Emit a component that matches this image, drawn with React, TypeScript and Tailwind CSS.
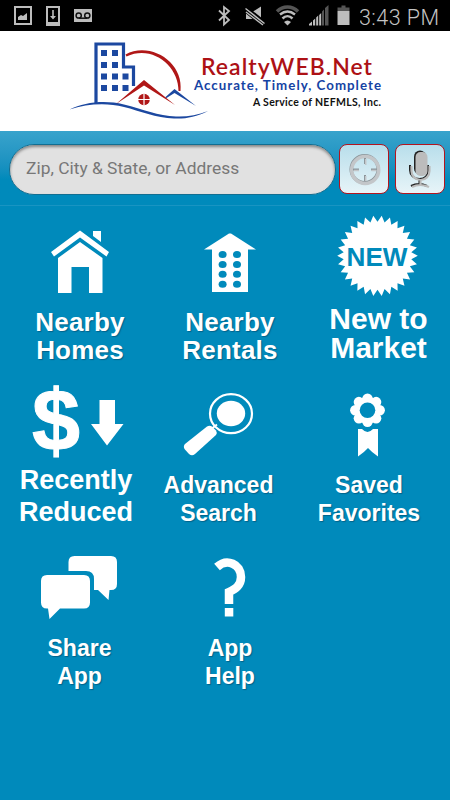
import type { ReactNode } from "react";

type TileProps = {
  viewBox: string;
  label: [string, string];
  labelClass: string;
  children: ReactNode;
};

const Tile = ({ viewBox, label, labelClass, children }: TileProps) => {
  return (
    <button type="button" className="flex flex-col items-start text-left">
      <svg viewBox={viewBox} className="w-[150px] h-[94px] shrink-0 overflow-visible" fill="white">
        {children}
      </svg>
      <span className={`block w-[150px] text-center font-bold whitespace-nowrap ${labelClass}`}>
        {label[0]}
        <br />
        {label[1]}
      </span>
    </button>
  );
};

const StatusBar = () => {
  return (
    <div className="h-[31px] bg-black flex items-center justify-between">
      <svg width="350" height="31" viewBox="0 0 350 31" fill="#bdbdbd">
        <path fillRule="evenodd" d="M14 6h18v19H14zM16 8v15h14V8z" />
        <path d="M18 20v-3l3-2 2 1 4-3v7z" />
        <path fillRule="evenodd" d="M46 6h14v20H46zM48 8v14h10V8z" />
        <path d="M52.2 10h1.6v6h2.2l-3 3.5-3-3.500h2.200z" />
        <path d="M74 9h18v13H74z" />
        <g fill="none" stroke="#111" strokeWidth="1.500">
          <circle cx="78.700" cy="15.500" r="2.600" />
          <circle cx="87.300" cy="15.500" r="2.600" />
          <path d="M78.700 18.200h8.600" />
        </g>
        <path d="M219 10.500l10 9.500-5 4.500V7l5 4-10 9.500" fill="none" stroke="#bdbdbd" strokeWidth="1.800" />
        <path d="M246 11.500h7l8-5v17l-8-4.500h-7z" />
        <path d="M246 9.500l18 14.500" stroke="#000" strokeWidth="6.500" />
        <path d="M245.500 8.500l19 15M246 12l17 13" stroke="#bdbdbd" strokeWidth="1.500" />
        <g fill="none">
          <path d="M277 11.500c6-6 15-6 21 0" stroke="#555" strokeWidth="3.500" />
          <path d="M280 14.500c5-4 10-4 15 0M282.500 18.500c3-3 7-3 10 0" stroke="#bdbdbd" strokeWidth="2.500" />
        </g>
        <path d="M284 22q3.500-3 7 0l-3.500 3.500z" />
        <path d="M309 25.500v-1.500l3-2.500v4zM313 25.500v-5l2.200-2v7zM316.200 25.500v-8l2-2v10zM319.200 25.500V15l2-2v12.500z" />
        <path d="M322 25.500V11.500l2-2v16zM325 25.500V8L328.500 5v20.500z" fill="#555" />
        <path d="M341.500 5.500h4v2h4V11h-12V7.500h4z" fill="#555" />
        <path d="M337.500 11h12v14h-12z" />
      </svg>
      <svg width="90" height="31" viewBox="360 0 90 31">
        <text x="359" y="24.500" fontFamily="Roboto, sans-serif" fontSize="21.500" fontWeight="300" fill="#c4c4c4" textLength="80">
          3:43 PM
        </text>
      </svg>
    </div>
  );
};

const Logo = () => {
  return (
    <header className="h-[100px] bg-white">
      <svg width="450" height="100" viewBox="0 31 450 100">
        <path d="M96 103V44h27.500v23h10v19" fill="none" stroke="#1c48a0" strokeWidth="3.200" />
        <g fill="#1c48a0">
          {[50, 62, 73.500, 85].map((y) => (
            <g key={y}>
              <rect x="101" y={y} width="6" height="6" />
              <rect x="112" y={y} width="6" height="6" />
              {y > 70 && <rect x="122.500" y={y} width="6" height="6" />}
            </g>
          ))}
          <path d="M69.500 109.500C85 102 105 100 124 104.500S158 116 176 116.500C187 117 197 115 208 111C196 117 186 119 174 118.500C156 118 140 111 124 107C106 102.500 87 104 69.500 109.500z" />
          <path d="M165 97.500l9.500-8.500L196 106l-21.500-13-8 5z" />
        </g>
        <path d="M125.500 54.500C150 41 184 62 180.500 91h-2C179 66 152 44 126.500 56.500z" fill="#b01717" />
        <path d="M116 104l28-24 31 25-31-19.500z" fill="#b01717" />
        <circle cx="144" cy="99.500" r="5.800" fill="#b01717" />
        <path d="M138 99.500h12M144 93.500v12" stroke="white" strokeWidth="1.200" />
        <text x="201" y="74.500" fontFamily="Lato, sans-serif" fontSize="23" fontWeight="600" fill="#ad1115" textLength="171">
          RealtyWEB.Net
        </text>
        <text x="194" y="90" fontFamily="Lato, sans-serif" fontSize="13.300" fontWeight="700" fill="#1543a4" textLength="187">
          Accurate, Timely, Complete
        </text>
        <text x="253" y="105.500" fontFamily="Lato, sans-serif" fontSize="10.500" fontWeight="700" fill="#111" textLength="128">
          A Service of NEFMLS, Inc.
        </text>
      </svg>
    </header>
  );
};

const SearchBar = () => {
  return (
    <div className="h-[75px] pt-[13px] pl-[9px] pr-[5px] flex items-start bg-linear-to-b from-[#38a3cc] to-[#008abb] to-65% border-b border-[#1994c2]">
      <div className="w-[327px] h-[51px] rounded-[25px] bg-[#e1e1e1] border border-[#126e91] shadow-[inset_0_2px_3px_rgba(0,0,0,0.400)] flex items-center pl-4">
        <input
          type="text"
          placeholder="Zip, City & State, or Address"
          className="w-full bg-transparent outline-none pb-0.5 font-['Roboto',sans-serif] text-[17.400px] text-gray-600 placeholder:text-[#777]"
        />
      </div>
      <div className="flex gap-[6px] ml-[3px]">
        <button type="button" aria-label="Locate me" className="size-[50px] rounded-lg border border-[#b4141e] bg-linear-to-b from-[#b8deeb] to-[#e7f4f8]">
          <svg viewBox="0 0 48 48" className="size-12" fill="none">
            <circle cx="24.700" cy="24.200" r="13.500" stroke="#8c969b" strokeWidth="3.500" />
            <circle cx="25.200" cy="25" r="13.500" stroke="#c3c6c9" strokeWidth="3.600" />
            <path d="M25 13v6M25 30v6M13 24.500h6M31 24.500h6" stroke="#8c969b" strokeWidth="2" />
            <path d="M25.700 14v6M25.700 31v5M14 25.500h5M31.500 25.500h5" stroke="#c3c6c9" strokeWidth="1.500" />
          </svg>
        </button>
        <button type="button" aria-label="Voice search" className="size-[50px] rounded-lg border border-[#b4141e] bg-linear-to-b from-[#b8deeb] to-[#e7f4f8]">
          <svg viewBox="0 0 48 48" className="size-12" fill="none">
            <rect x="18" y="5.500" width="12" height="24" rx="6" fill="#222" />
            <path d="M14 20v5c0 5 4 9 9.500 9S32 30 32 25v-5M23.500 34v6M15 41q8-4 16 0" stroke="#222" strokeWidth="2" />
            <rect x="19.500" y="7" width="12" height="24" rx="5" fill="#bcbcbc" />
            <path d="M15.500 21v5c0 5 4 9 9 9s9-4 9-9v-5M24.500 35v6M16 42q8-4 17 0" stroke="#bcbcbc" strokeWidth="2.200" />
          </svg>
        </button>
      </div>
    </div>
  );
};

// 30 pointed star used behind the NEW badge
const burst = Array.from({ length: 60 }, (_, i) => {
  const r = i % 2 ? 34 : 40.3;
  const a = (i * Math.PI) / 30 - Math.PI / 2 + Math.PI / 30;
  return `${(377.5 + r * Math.cos(a)).toFixed(2)},${(255.8 + r * Math.sin(a)).toFixed(2)}`;
}).join(" ");

const petals = Array.from({ length: 8 }, (_, i) => {
  const a = (i * Math.PI) / 4;
  return { x: 367.5 + 12.2 * Math.cos(a), y: 410.2 + 11.5 * Math.sin(a) };
});

const shadow = "[text-shadow:1px_1px_1px_rgba(0,50,80,0.450)]";

const App = () => {
  return (
    <div className="w-[450px] h-[800px] overflow-hidden bg-[#008abb] text-white font-['Liberation_Sans',Arial,sans-serif]">
      <StatusBar />
      <Logo />
      <SearchBar />
      <main className="grid grid-cols-3 grid-rows-[169px_166px_160px]">
        <Tile viewBox="0 206 150 94" label={["Nearby", "Homes"]} labelClass={`pl-[10px] pt-[9px] text-[26px] leading-[27.500px] tracking-[0.2px] ${shadow}`}>
          <path d="M51 252l29-21.500 29 21.500-2.500 4.500L80 237.500 54 256.500zM93 231h8v11l-8-6z" />
          <path d="M58 258l22-16 22.500 16v35H89v-26H71.500v26H58z" />
        </Tile>
        <Tile viewBox="150 206 150 94" label={["Nearby", "Rentals"]} labelClass={`pl-[10px] pt-[9px] text-[26px] leading-[27.500px] tracking-[0.2px] ${shadow}`}>
          <path d="M204 249.500l25-16h2l25 16h-8V292h-36v-42.500z" />
          {[254.5, 264.5, 274.2, 284.2].map((y) => (
            <g key={y} fill="#008abb">
              <ellipse cx="222.600" cy={y} rx="4" ry="3.500" />
              <ellipse cx="237" cy={y} rx="4" ry="3.500" />
            </g>
          ))}
        </Tile>
        <Tile viewBox="300 206 150 94" label={["New to", "Market"]} labelClass="pl-[7px] pt-[4px] text-[30px] leading-[29px]">
          <polygon points={burst} />
          <text x="346.500" y="265.500" fontSize="26.500" fontWeight="700" fill="#008abb" textLength="61" lengthAdjust="spacingAndGlyphs">
            NEW
          </text>
        </Tile>
        <Tile viewBox="0 375 150 94" label={["Recently", "Reduced"]} labelClass="pl-[2px] mt-[-4px] text-[27px] leading-[31.800px]">
          <text x="32" y="450.500" fontSize="87" fontWeight="700" stroke="white" strokeWidth="1" textLength="48" lengthAdjust="spacingAndGlyphs">
            $
          </text>
          <path d="M99.500 400H115v24h8.500L107 445.500 91 424h8.500z" />
        </Tile>
        <Tile viewBox="150 375 150 94" label={["Advanced", "Search"]} labelClass={`pr-[13px] pt-[3px] text-[23px] leading-[27.700px] ${shadow}`}>
          <ellipse cx="231" cy="413.700" rx="21" ry="19.500" fill="none" stroke="white" strokeWidth="2.200" />
          <ellipse cx="231" cy="413.500" rx="14.200" ry="12.700" />
          <path d="M207 426.500q2.500-1.500 5 0l4 4q1.500 2 0 4.500l-21 19q-3 2.500-6 0l-4.500-5q-1.500-3 .5-5z" />
          <path d="M212 428.500l5-4" stroke="white" strokeWidth="2" />
        </Tile>
        <Tile viewBox="300 375 150 94" label={["Saved", "Favorites"]} labelClass={`pr-[12px] pt-[3px] text-[23px] leading-[27.700px] ${shadow}`}>
          <circle cx="367.500" cy="410.200" r="13.500" />
          {petals.map((p, i) => (
            <circle key={i} cx={p.x} cy={p.y} r="5.200" />
          ))}
          <circle cx="367.500" cy="410.200" r="7.800" fill="#008abb" />
          <path d="M358 429h4q5.500 6 11 0h5v27.500q-6-4-10-8.500-4 4.500-10 8.500z" />
        </Tile>
        <Tile viewBox="0 541 150 94" label={["Share", "App"]} labelClass={`pl-[9px] text-[23px] leading-[27.700px] ${shadow}`}>
          <path d="M68.500 571v-9q0-6 6-6H111q6 0 6 6v22q0 6-6 6h-1.500l-1 10L98 590h-4v-11q0-8-8-8z" />
          <path d="M47 575h37q6 0 6 6v21.500q0 6-6 6H60L49.500 619 48 608.500h-1q-6 0-6-6V581q0-6 6-6z" />
        </Tile>
        <Tile viewBox="150 541 150 94" label={["App", "Help"]} labelClass={`pl-[10px] text-[23px] leading-[27.700px] ${shadow}`}>
          <path d="M217 567c10-9 24-3 24 10 0 9-6 12-12 15v12" fill="none" stroke="white" strokeWidth="8.500" />
          <path d="M224.800 608h8.500v8.500h-8.500z" />
        </Tile>
      </main>
    </div>
  );
};

export default App;
